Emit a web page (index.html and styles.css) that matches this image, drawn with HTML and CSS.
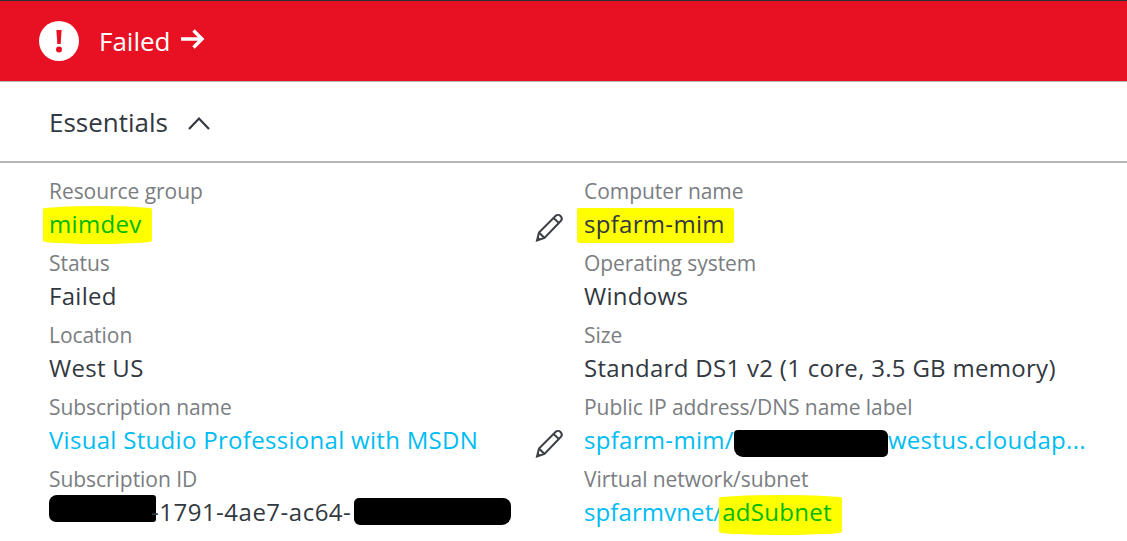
FILE: index.html
```html
<!DOCTYPE html>
<html lang="en">
    <head>
        <meta charset="UTF-8">
        <title>Essentials</title>
        <link rel="stylesheet" href="styles.css">
    </head>
    <body>
        <div class="statusbar">
            <svg class="statusicon" width="40" height="40" viewBox="0 0 40 40">
                <circle cx="20" cy="20" r="20" fill="#fff"/>
                <path d="M17.400 9h5.200l-.9 14h-3.400z" fill="#e81123"/>
                <circle cx="20" cy="28.500" r="3" fill="#e81123"/>
            </svg>
            <span class="statustext">Failed</span>
            <svg class="statusarrow" width="24" height="20" viewBox="0 0 24 20">
                <path d="M0 10h21M12.500 1.500L21 10l-8.500 8.500" fill="none" stroke="#fff" stroke-width="3.400"/>
            </svg>
        </div>
        <div class="essentials">
            <span>Essentials</span>
            <svg width="22" height="14" viewBox="0 0 22 14">
                <path d="M1 13L11 2.500 21 13" fill="none" stroke="#32383f" stroke-width="2.200"/>
            </svg>
        </div>
        <div class="props">
            <div class="col">
                <div class="label">Resource group</div>
                <div class="value"><span class="mark mark-a"><span class="green">mimdev</span></span></div>
                <div class="label">Status</div>
                <div class="value">Failed</div>
                <div class="label">Location</div>
                <div class="value">West US</div>
                <div class="label">Subscription name</div>
                <div class="value"><a href="#">Visual Studio Professional with MSDN</a></div>
                <div class="label">Subscription ID</div>
                <div class="value subid"><span class="hide hide-a"></span>-1791-4ae7-ac64-<span class="hide hide-b"></span></div>
            </div>
            <div class="pencils">
                <svg class="pencil" width="30" height="30" viewBox="0 0 30 30">
                    <path d="M2 28.500l2-8L20.500 4c1.500-1.500 3.500-1.500 5 0s1.700 3.500.2 5L9.500 26zM4 20.500l5.500 5.500M18.500 6l6 5.500" fill="none" stroke="#3c4046" stroke-width="2"/>
                    <path d="M2 28.500l.9-4 3.100 3z" fill="#3c4046"/>
                </svg>
                <svg class="pencil" width="30" height="30" viewBox="0 0 30 30">
                    <path d="M2 28.500l2-8L20.500 4c1.500-1.500 3.500-1.500 5 0s1.700 3.500.2 5L9.500 26zM4 20.500l5.500 5.500M18.500 6l6 5.500" fill="none" stroke="#3c4046" stroke-width="2"/>
                    <path d="M2 28.500l.9-4 3.100 3z" fill="#3c4046"/>
                </svg>
            </div>
            <div class="col">
                <div class="label">Computer name</div>
                <div class="value"><span class="mark mark-b">spfarm-mim</span></div>
                <div class="label">Operating system</div>
                <div class="value">Windows</div>
                <div class="label">Size</div>
                <div class="value">Standard DS1 v2 (1 core, 3.5 GB memory)</div>
                <div class="label">Public IP address/DNS name label</div>
                <div class="value"><a href="#">spfarm-mim/<span class="hide hide-c"></span>westus.cloudap...</a></div>
                <div class="label">Virtual network/subnet</div>
                <div class="value"><a class="vnet" href="#">spfarmvnet/</a><span class="mark mark-c"><span class="green">adSubnet</span></span></div>
            </div>
        </div>
    </body>
</html>
```

FILE: styles.css
```css
*{
    padding: 0px;
    margin: 0px;
    box-sizing: border-box;
}
body{
    width: 1127px;
    height: 541px;
    overflow: hidden;
    background: #fff;
    color: #32383f;
    font-family: "Open Sans", "Noto Sans", sans-serif;
}
.statusbar{
    height: 82px;
    display: flex;
    align-items: center;
    background: #e81123;
    border-top: 1px solid #2b2f36;
    border-bottom: 1px solid #b5b5b5;
    padding-left: 39px;
    color: #fff;
}
.statustext{
    font-size: 26px;
    margin-left: 20px;
    margin-top: -1px;
}
.statusarrow{
    margin-left: 10px;
    margin-top: -4px;
}
.essentials{
    height: 81px;
    display: flex;
    align-items: center;
    gap: 20px;
    padding-left: 49px;
    border-bottom: 2px solid #b5b5b5;
    font-size: 26px;
}
.essentials svg{
    margin-top: 2px;
}
.props{
    display: flex;
    padding-top: 12px;
    padding-left: 49px;
}
.col{
    flex: none;
    width: 535px;
}
.col:last-child{
    width: auto;
    white-space: nowrap;
}
.pencils{
    flex: none;
    width: 0;
    position: relative;
}
.pencil{
    position: absolute;
    left: -49px;
    top: 37px;
}
.pencil + .pencil{
    top: 253px;
}
.label{
    height: 33px;
    line-height: 33px;
    font-size: 21px;
    letter-spacing: -0.05px;
    color: #7a7d81;
}
.value{
    height: 39px;
    line-height: 31px;
    font-size: 24px;
    letter-spacing: 0.3px;
}
.subid{
    letter-spacing: 0.5px;
}
a{
    color: #00bcf2;
    text-decoration: none;
}
.vnet{
    letter-spacing: 0.1px;
}
.green{
    color: #00b900;
}
.mark{
    display: inline-block;
    background: #ffff00;
}
.mark-a{
    padding: 2px 11px 5px 6px;
    margin: -2px 0 -5px -6px;
    border-radius: 50% 50% 50% 50% / 3px 3px 3px 3px;
}
.mark-b{
    padding: 0 9px 4px 7px;
    margin: 0 0 -4px -7px;
    border-radius: 2px;
}
.mark-c{
    padding: 1px 10px 8px 3px;
    margin: -1px 0 -8px -3px;
    border-radius: 50% 50% 50% 50% / 3px 3px 3px 3px;
}
.hide{
    display: inline-block;
    background: #000;
    height: 27px;
    margin-top: -10px;
    margin-bottom: -10px;
}
.hide-a{
    width: 107px;
    margin-right: -5px;
    vertical-align: 9px;
    border-radius: 8px 3px 3px 7px;
}
.hide-b{
    width: 157px;
    margin-left: 3px;
    vertical-align: 6px;
    border-radius: 5px 8px 9px 6px;
}
.hide-c{
    width: 154px;
    vertical-align: 2px;
    border-radius: 4px 6px 5px 9px;
}
```
